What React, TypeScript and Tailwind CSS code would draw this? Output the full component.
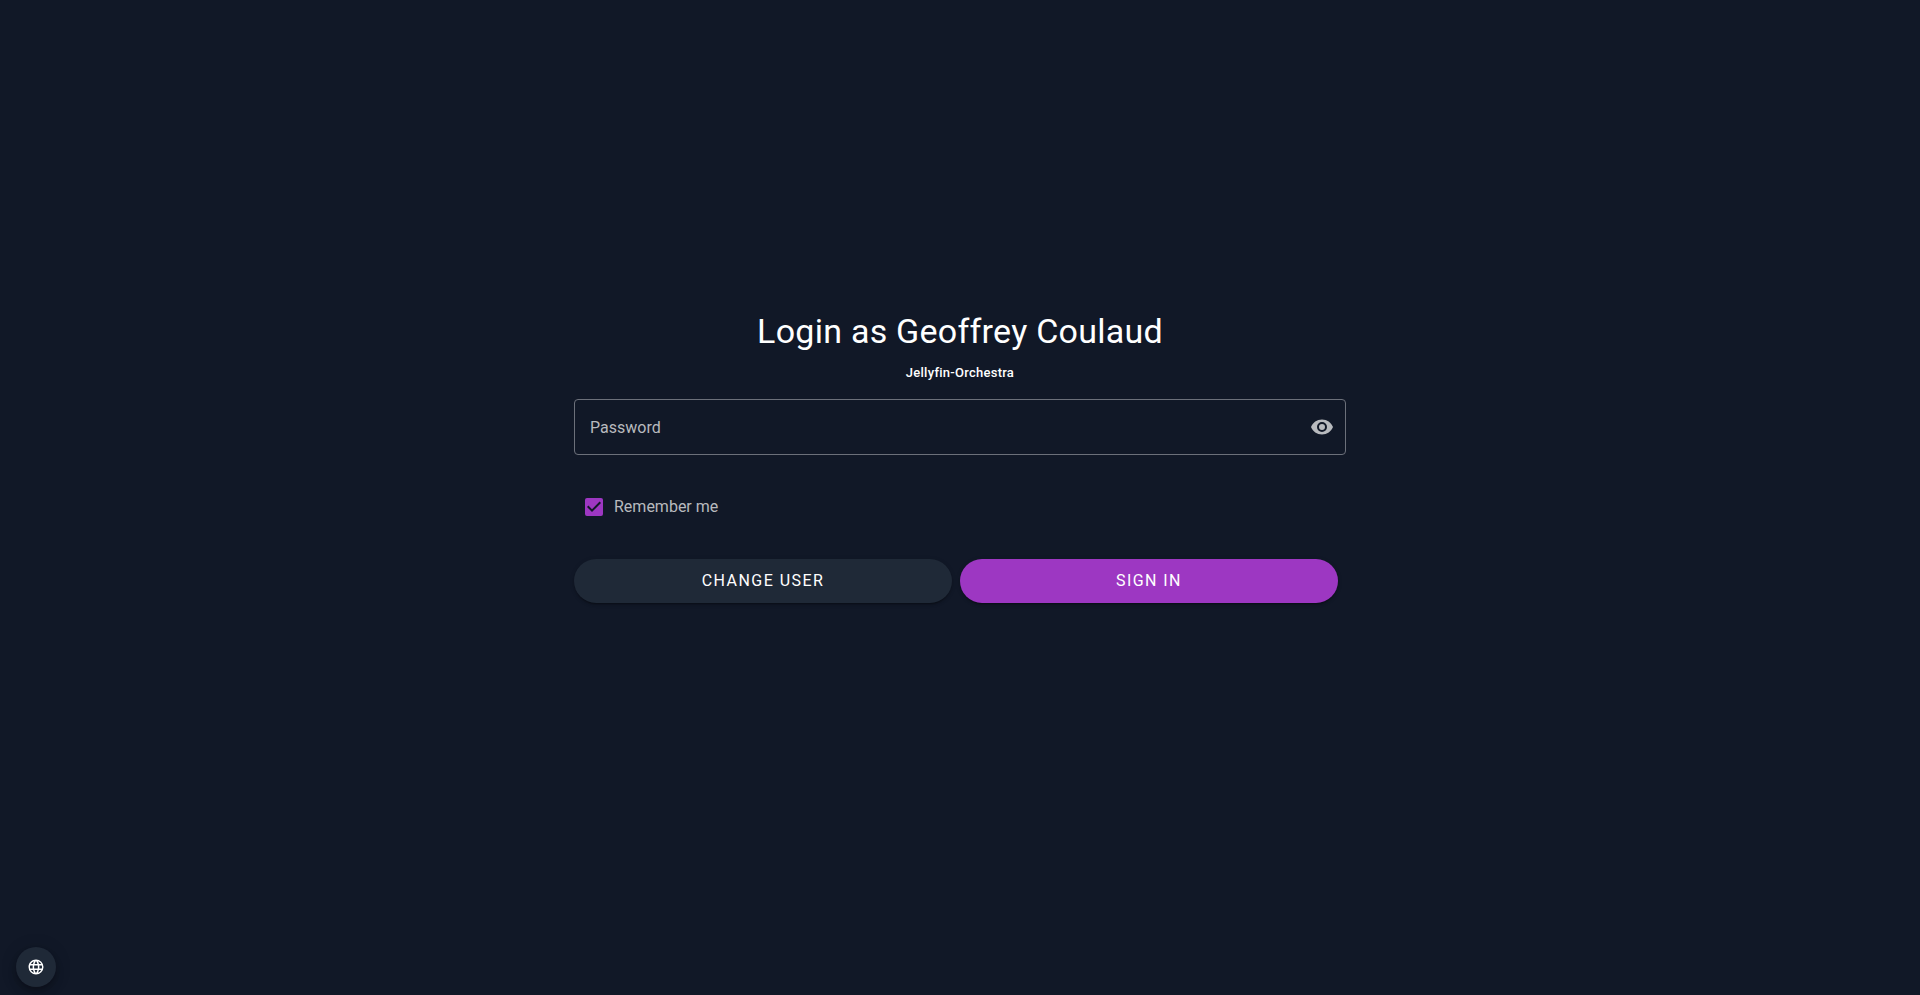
import { useState } from 'react';

const EYE =
  'M12 9a3 3 0 0 0-3 3 3 3 0 0 0 3 3 3 3 0 0 0 3-3 3 3 0 0 0-3-3m0 8a5 5 0 0 1-5-5 5 5 0 0 1 5-5 5 5 0 0 1 5 5 5 5 0 0 1-5 5m0-12.500c-5 0-9.270 3.110-11 7.500 1.730 4.390 6 7.500 11 7.500s9.270-3.110 11-7.500c-1.730-4.390-6-7.500-11-7.500z';
const WEB =
  'M16.360 14c.080-.660.140-1.320.140-2 0-.680-.060-1.340-.140-2h3.380c.160.640.260 1.310.260 2s-.100 1.360-.260 2m-5.150 5.560c.600-1.110 1.060-2.310 1.380-3.560h2.950a8.030 8.030 0 0 1-4.330 3.560M14.340 14H9.660c-.100-.660-.160-1.320-.160-2 0-.680.060-1.350.160-2h4.680c.090.650.160 1.320.160 2 0 .680-.070 1.340-.160 2M12 19.960c-.830-1.200-1.500-2.530-1.910-3.960h3.820c-.410 1.430-1.080 2.760-1.910 3.960M8 8H5.080A7.923 7.923 0 0 1 9.400 4.440C8.800 5.550 8.350 6.750 8 8m-2.920 8H8c.350 1.250.800 2.450 1.400 3.560A8.008 8.008 0 0 1 5.080 16m-.820-2C4.100 13.360 4 12.690 4 12s.100-1.360.260-2h3.380c-.080.660-.140 1.320-.140 2 0 .680.060 1.340.140 2M12 4.030c.830 1.200 1.500 2.540 1.910 3.970h-3.820c.410-1.430 1.080-2.770 1.910-3.970M18.920 8h-2.950a15.650 15.650 0 0 0-1.380-3.560c1.840.630 3.370 1.900 4.330 3.560M12 2C6.470 2 2 6.500 2 12a10 10 0 0 0 10 10 10 10 0 0 0 10-10A10 10 0 0 0 12 2z';

const RAISED =
  'shadow-[0_3px_1px_-2px_rgba(0,0,0,0.2),0_2px_2px_0_rgba(0,0,0,0.14),0_1px_5px_0_rgba(0,0,0,0.12)]';

export default function App() {
  const [password, setPassword] = useState('');
  const [visible, setVisible] = useState(false);
  const [remember, setRemember] = useState(true);

  return (
    <div className="flex min-h-screen flex-col bg-[#111827] font-[Roboto,sans-serif] text-base text-white">
      <main className="flex flex-1 flex-col items-center justify-center px-3">
        <form
          className="flex w-full max-w-[772px] flex-col pb-[33px]"
          onSubmit={(event) => event.preventDefault()}
        >
          <h1 className="text-center text-[34px] leading-10 tracking-[0.0075em]">
            Login as Geoffrey Coulaud
          </h1>
          <h2 className="mt-2.5 text-center text-[13px] leading-6 font-medium tracking-[0.02em]">
            Jellyfin-Orchestra
          </h2>

          <div className="mt-3.5 flex h-14 items-center rounded border border-[#6c707a] pr-[11px] pl-[15px]">
            <input
              type={visible ? 'text' : 'password'}
              aria-label="Password"
              placeholder="Password"
              value={password}
              onChange={(event) => setPassword(event.target.value)}
              className="h-full min-w-0 flex-1 bg-transparent outline-none placeholder:text-[#b8babe]"
            />
            <button
              type="button"
              aria-label="Show password"
              aria-pressed={visible}
              onClick={() => setVisible(!visible)}
              className="text-[#b8babe]"
            >
              <svg viewBox="0 0 24 24" className="size-6" fill="currentColor" aria-hidden="true">
                <path d={EYE} />
              </svg>
            </button>
          </div>

          <label className="mt-10 flex items-center gap-2 self-start pl-2 text-[#b8babe]">
            <span className="grid size-6 place-items-center">
              <input
                type="checkbox"
                checked={remember}
                onChange={(event) => setRemember(event.target.checked)}
                className="peer col-start-1 row-start-1 size-[18px] appearance-none rounded-xs border-2 border-[#b8babe] checked:border-[#9d37c2] checked:bg-[#9d37c2]"
              />
              <svg
                viewBox="0 0 24 24"
                className="pointer-events-none invisible col-start-1 row-start-1 size-6 peer-checked:visible"
                fill="#111827"
                aria-hidden="true"
              >
                <path d="M10 17l-5-5 1.410-1.420L10 14.170l7.590-7.590L19 8l-9 9z" />
              </svg>
            </span>
            Remember me
          </label>

          <div className="mt-10 grid grid-cols-2">
            <button
              type="button"
              className={`mr-2 h-11 rounded-full bg-[#1f2937] uppercase tracking-[0.09em] ${RAISED}`}
            >
              Change user
            </button>
            <button
              type="submit"
              className={`mr-2 h-11 rounded-full bg-[#9d37c2] uppercase tracking-[0.09em] ${RAISED}`}
            >
              Sign in
            </button>
          </div>
        </form>
      </main>

      <footer className="flex px-4 pb-2">
        <button
          type="button"
          aria-label="Language"
          className="grid size-10 place-items-center rounded-full bg-[#1f2937] shadow-[0_3px_5px_-1px_rgba(0,0,0,0.2),0_6px_10px_0_rgba(0,0,0,0.14),0_1px_18px_0_rgba(0,0,0,0.12)]"
        >
          <svg viewBox="0 0 24 24" className="size-[18px]" fill="currentColor" aria-hidden="true">
            <path d={WEB} />
          </svg>
        </button>
      </footer>
    </div>
  );
}
